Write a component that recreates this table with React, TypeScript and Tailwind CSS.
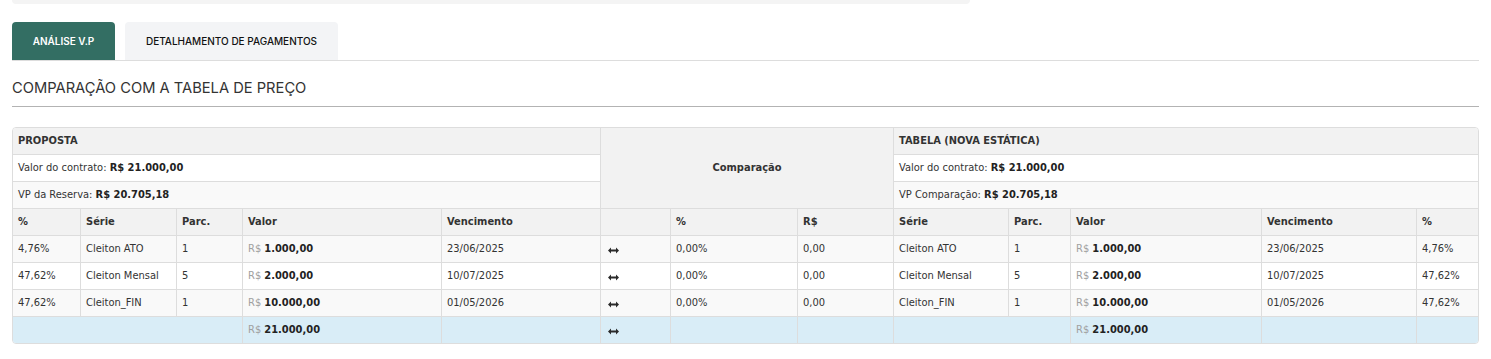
import React from "react";

const cellFont = { fontFamily: '"DejaVu Sans Condensed", Tahoma, "DejaVu Sans", sans-serif' };

function Arrow() {
  return (
    <svg width="11" height="7" viewBox="0 0 11 7" className="inline-block mt-[4px]">
      <path d="M0 3.5 L3 0.5 L3 2.6 L8 2.6 L8 0.5 L11 3.5 L8 6.5 L8 4.4 L3 4.4 L3 6.5 Z" fill="#2a2a2a" />
    </svg>
  );
}

function Money({ v }: { v: string }) {
  return (
    <span>
      <span className="text-[#a0a0a0]">R$ </span>
      <b className="text-[#222]">{v}</b>
    </span>
  );
}

const td = "border border-[#dddddd] px-[5px] py-0 text-left align-middle whitespace-nowrap";

const rows = [
  { p: "4,76%", s: "Cleiton ATO", n: "1", v: "1.000,00", d: "23/06/2025", bg: "bg-[#f9f9f9]" },
  { p: "47,62%", s: "Cleiton Mensal", n: "5", v: "2.000,00", d: "10/07/2025", bg: "bg-white" },
  { p: "47,62%", s: "Cleiton_FIN", n: "1", v: "10.000,00", d: "01/05/2026", bg: "bg-[#f9f9f9]" },
];

export default function App() {
  return (
    <div className="px-3 bg-white min-h-[359px]" style={{ fontFamily: 'Inter, "Noto Sans", sans-serif' }}>
      <div className="h-[4px] w-[958px] bg-[#f4f4f4] rounded-b-[4px]" />
      <div className="mt-[18px] flex gap-[10px] border-b border-[#dddddd]">
        <div className="h-[38px] w-[103px] rounded-t-[4px] bg-[#336e63] flex items-center justify-center text-[10px] font-semibold text-white">
          ANÁLISE V.P
        </div>
        <div className="h-[38px] w-[213px] rounded-t-[4px] bg-[#f3f4f6] flex items-center justify-center text-[10px] font-medium text-[#111]">
          DETALHAMENTO DE PAGAMENTOS
        </div>
      </div>
      <div className="pt-[17px] pb-[8px] border-b border-[#b3b3b3] text-[14.7px] leading-[20px] text-[#333]">
        COMPARAÇÃO COM A TABELA DE PREÇO
      </div>
      <div className="mt-[20px] border border-[#dddddd] rounded-[4px] overflow-hidden text-[11px] text-[#333]" style={cellFont}>
        <table className="table-fixed border-collapse -m-px" style={{ width: "calc(100% + 2px)" }}>
          <colgroup>
            <col style={{ width: 68 }} />
            <col style={{ width: 96 }} />
            <col style={{ width: 66 }} />
            <col style={{ width: 199 }} />
            <col style={{ width: 159 }} />
            <col style={{ width: 70 }} />
            <col style={{ width: 127 }} />
            <col style={{ width: 96 }} />
            <col style={{ width: 115 }} />
            <col style={{ width: 62 }} />
            <col style={{ width: 191 }} />
            <col style={{ width: 155 }} />
            <col style={{ width: 63 }} />
          </colgroup>
          <tbody>
            <tr className="h-[27px] bg-[#f2f2f2]">
              <td colSpan={5} className={`${td} font-bold`}>PROPOSTA</td>
              <td colSpan={3} rowSpan={3} className={`${td} text-center! font-bold bg-[#f2f2f2]`}>Comparação</td>
              <td colSpan={5} className={`${td} font-bold`}>TABELA (NOVA ESTÁTICA)</td>
            </tr>
            <tr className="h-[27px] bg-white">
              <td colSpan={5} className={td}>Valor do contrato: <b className="text-[#222]">R$ 21.000,00</b></td>
              <td colSpan={5} className={td}>Valor do contrato: <b className="text-[#222]">R$ 21.000,00</b></td>
            </tr>
            <tr className="h-[27px] bg-[#f9f9f9]">
              <td colSpan={5} className={td}>VP da Reserva: <b className="text-[#222]">R$ 20.705,18</b></td>
              <td colSpan={5} className={td}>VP Comparação: <b className="text-[#222]">R$ 20.705,18</b></td>
            </tr>
            <tr className="h-[27px] bg-[#f2f2f2] font-bold">
              <td className={td}>%</td>
              <td className={td}>Série</td>
              <td className={td}>Parc.</td>
              <td className={td}>Valor</td>
              <td className={td}>Vencimento</td>
              <td className={td}></td>
              <td className={td}>%</td>
              <td className={td}>R$</td>
              <td className={td}>Série</td>
              <td className={td}>Parc.</td>
              <td className={td}>Valor</td>
              <td className={td}>Vencimento</td>
              <td className={td}>%</td>
            </tr>
            {rows.map((r, i) => (
              <tr key={i} className={`h-[27px] ${r.bg}`}>
                <td className={td}>{r.p}</td>
                <td className={td}>{r.s}</td>
                <td className={td}>{r.n}</td>
                <td className={td}><Money v={r.v} /></td>
                <td className={td}>{r.d}</td>
                <td className={`${td} pl-[7px]`}><Arrow /></td>
                <td className={td}>0,00%</td>
                <td className={td}>0,00</td>
                <td className={td}>{r.s}</td>
                <td className={td}>{r.n}</td>
                <td className={td}><Money v={r.v} /></td>
                <td className={td}>{r.d}</td>
                <td className={td}>{r.p}</td>
              </tr>
            ))}
            <tr className="h-[27px] bg-[#d9edf7]">
              <td colSpan={3} className={td}></td>
              <td className={td}><Money v="21.000,00" /></td>
              <td className={td}></td>
              <td className={`${td} pl-[7px]`}><Arrow /></td>
              <td className={td}></td>
              <td className={td}></td>
              <td colSpan={2} className={td}></td>
              <td className={td}><Money v="21.000,00" /></td>
              <td className={td}></td>
              <td className={td}></td>
            </tr>
          </tbody>
        </table>
      </div>
    </div>
  );
}
